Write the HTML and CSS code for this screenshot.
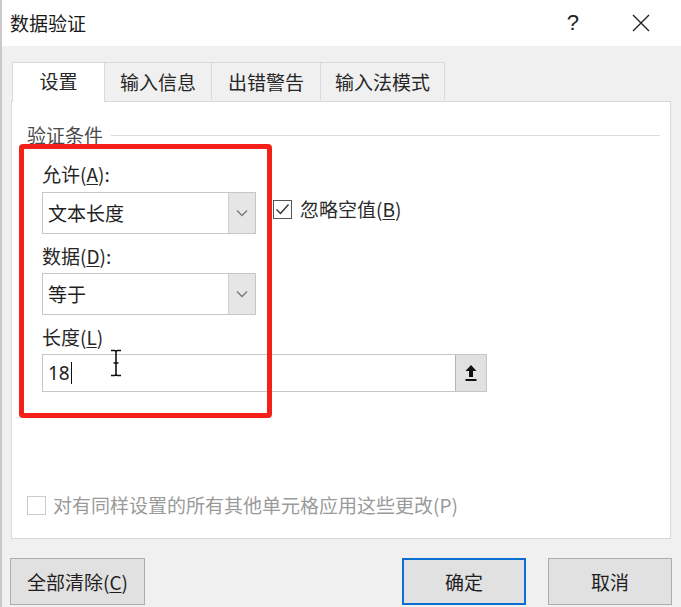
FILE: index.html
```html
<!DOCTYPE html>
<html lang="zh-CN">
<head>
<meta charset="utf-8">
<title>数据验证</title>
<link rel="stylesheet" href="styles.css">
</head>
<body>
<div class="dialog">
  <div class="titlebar">
    <span class="title">数据验证</span>
    <span class="help">?</span>
    <span class="close">
      <svg width="18" height="18" viewBox="0 0 18 18"><path d="M1 1 L17 17 M17 1 L1 17" stroke="#222" stroke-width="1.4" fill="none"/></svg>
    </span>
  </div>

  <div class="tabs">
    <div class="tab active">设置</div>
    <div class="tab t2">输入信息</div>
    <div class="tab t3">出错警告</div>
    <div class="tab t4">输入法模式</div>
  </div>

  <div class="panel">
    <div class="legend"><span class="legend-text">验证条件</span><span class="legend-line"></span></div>

    <div class="label first">允许(<u>A</u>):</div>
    <div class="row">
      <div class="select"><span class="value">文本长度</span><span class="drop"><svg width="12" height="8" viewBox="0 0 12 8"><path d="M1 1.5 L6 6.5 L11 1.5" stroke="#777" stroke-width="1.3" fill="none"/></svg></span></div>
      <div class="check">
        <span class="box"><svg width="15" height="13" viewBox="0 0 15 13"><path d="M1.5 6.5 L5.5 10.5 L13.5 1.5" stroke="#333" stroke-width="1.4" fill="none"/></svg></span>
        <span class="check-text">忽略空值(<u>B</u>)</span>
      </div>
    </div>

    <div class="label">数据(<u>D</u>):</div>
    <div class="select"><span class="value">等于</span><span class="drop"><svg width="12" height="8" viewBox="0 0 12 8"><path d="M1 1.5 L6 6.5 L11 1.5" stroke="#777" stroke-width="1.3" fill="none"/></svg></span></div>

    <div class="label">长度(<u>L</u>)</div>
    <div class="input">
      <span class="value">18<span class="caret"></span></span>
      <span class="ref-btn"><svg width="14" height="20" viewBox="0 0 14 20"><path d="M7 2 L1.5 8 L5 8 L5 14 L9 14 L9 8 L12.5 8 Z" fill="#111"/><rect x="1.5" y="16" width="11" height="2" fill="#111"/></svg></span>
    </div>

    <div class="apply">
      <span class="box disabled"></span>
      <span class="apply-text">对有同样设置的所有其他单元格应用这些更改(P)</span>
    </div>
  </div>

  <div class="footer">
    <button class="btn clear">全部清除(<u>C</u>)</button>
    <span class="spacer"></span>
    <button class="btn ok">确定</button>
    <button class="btn cancel">取消</button>
  </div>

  <div class="highlight"></div>
  <svg class="ibeam" width="12" height="28" viewBox="0 0 12 28"><path d="M1 1.5 H4.5 Q6 1.5 6 3 V25 Q6 26.5 4.5 26.5 H1 M11 1.5 H7.5 Q6 1.5 6 3 M6 25 Q6 26.5 7.5 26.5 H11 M3.5 14 H8.5" stroke="#111" stroke-width="1.6" fill="none"/></svg>
</div>
</body>
</html>
```

FILE: styles.css
```css
* { box-sizing: border-box; }

html, body {
  margin: 0;
  padding: 0;
}

body {
  width: 681px;
  height: 607px;
  overflow: hidden;
  background: #f0f0f0;
  font-family: "Noto Sans CJK SC", "Noto Sans", sans-serif;
  font-size: 19px;
  color: #2b2b2b;
}

u { text-decoration-thickness: 1px; text-underline-offset: 2px; }

.dialog {
  position: relative;
  width: 681px;
  height: 607px;
  display: flex;
  flex-direction: column;
  border-left: 2px solid #c9c9c9;
}

.titlebar {
  height: 46px;
  background: #ffffff;
  display: flex;
  align-items: center;
  padding-left: 8px;
  margin-left: -2px;
  border-left: 2px solid #c9c9c9;
}

.title {
  font-size: 19px;
  line-height: 24px;
  color: #1a1a1a;
  flex: 1;
}

.help {
  font-family: "Liberation Sans", sans-serif;
  font-size: 22px;
  line-height: 24px;
  color: #222;
  margin-right: 53px;
}

.close {
  display: flex;
  margin-right: 31px;
}

.tabs {
  display: flex;
  align-items: flex-end;
  margin-top: 15px;
  padding-left: 10px;
  height: 40px;
  position: relative;
  z-index: 2;
}

.tab {
  height: 38px;
  display: flex;
  align-items: center;
  justify-content: center;
  line-height: 24px;
  border: 1px solid #d9d9d9;
  border-bottom: none;
  border-left: none;
  background: #f0f0f0;
  color: #262626;
  margin-bottom: 1px;
}

.tab.active {
  height: 40px;
  width: 93px;
  background: #ffffff;
  border-left: 1px solid #d9d9d9;
  margin-bottom: -1px;
  padding-bottom: 3px;
}

.t2 { width: 107px; }
.t3 { width: 109px; }
.t4 { width: 124px; }

.panel {
  margin: 0 10px 0 9px;
  height: 438px;
  background: #ffffff;
  border: 1px solid #d9d9d9;
  display: flex;
  flex-direction: column;
  padding-left: 30px;
  position: relative;
  z-index: 1;
}

.legend {
  display: flex;
  align-items: center;
  margin-top: 21px;
  margin-left: -15px;
  margin-right: 10px;
  line-height: 24px;
}

.legend-text {
  color: #4a4a4a;
}

.legend-line {
  flex: 1;
  height: 1px;
  background: #dcdcdc;
  margin-left: 8px;
}

.label {
  line-height: 24px;
  margin-top: 10px;
  margin-bottom: 5px;
  color: #262626;
}

.label.first { margin-top: 15px; margin-bottom: 6px; }

.row {
  display: flex;
  align-items: flex-start;
}

.select {
  width: 214px;
  height: 42px;
  border: 1px solid #c6c6c6;
  display: flex;
  align-items: center;
  background: #fff;
}

.select .value {
  flex: 1;
  padding-left: 5px;
  line-height: 24px;
  color: #1e1e1e;
}

.drop {
  width: 27px;
  height: 100%;
  background: #e6e6e6;
  border-left: 1px solid #cfcfcf;
  display: flex;
  align-items: center;
  justify-content: center;
}

.check {
  display: flex;
  align-items: center;
  margin-left: 17px;
  margin-top: 5px;
}

.box {
  width: 19px;
  height: 19px;
  border: 1px solid #555;
  display: flex;
  align-items: center;
  justify-content: center;
  background: #fff;
}

.check-text {
  margin-left: 8px;
  line-height: 24px;
  color: #2b2b2b;
}

.input {
  width: 445px;
  height: 38px;
  border: 1px solid #c6c6c6;
  display: flex;
  align-items: center;
}

.input .value {
  flex: 1;
  padding-left: 5px;
  line-height: 24px;
  display: flex;
  align-items: center;
  font-family: "Noto Sans", sans-serif;
  color: #222;
}

.caret {
  display: inline-block;
  width: 1px;
  height: 22px;
  background: #111;
  margin-left: 1px;
}

.ref-btn {
  width: 31px;
  height: 100%;
  background: #e1e1e1;
  border-left: 1px solid #b5b5b5;
  display: flex;
  align-items: center;
  justify-content: center;
}

.apply {
  margin-top: auto;
  margin-bottom: 21px;
  margin-left: -15px;
  display: flex;
  align-items: center;
  line-height: 24px;
}

.box.disabled {
  border-color: #cccccc;
}

.apply-text {
  margin-left: 7px;
  color: #9a9a9a;
}

.footer {
  display: flex;
  padding: 19px 9px 0 8px;
}

.spacer { flex: 1; }

.btn {
  height: 47px;
  font-family: "Noto Sans CJK SC", "Noto Sans", sans-serif;
  font-size: 19px;
  line-height: 24px;
  color: #1e1e1e;
  background: #e1e1e1;
  border: 1px solid #adadad;
  padding: 0;
}

.clear { width: 135px; }

.ok {
  width: 124px;
  border: 2px solid #0a6fd0;
  margin-right: 22px;
}

.cancel { width: 124px; }

.highlight {
  position: absolute;
  left: 17px;
  top: 144px;
  width: 253px;
  height: 274px;
  border: 5px solid #f5201a;
  border-radius: 4px;
  z-index: 5;
}

.ibeam {
  position: absolute;
  left: 108px;
  top: 349px;
  z-index: 6;
}
```
